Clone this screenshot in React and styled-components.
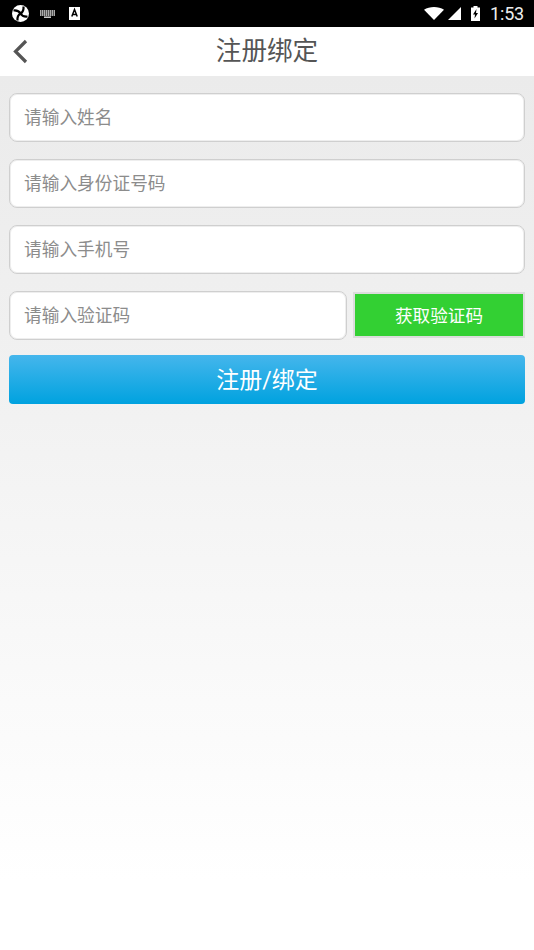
import styled, { createGlobalStyle } from 'styled-components';

const GlobalStyle = createGlobalStyle`
  html, body {
    margin: 0;
    padding: 0;
    height: 100%;
    background: #fff;
  }
  * {
    box-sizing: border-box;
  }
`;

const Page = styled.div`
  width: 534px;
  height: 950px;
  display: flex;
  flex-direction: column;
  overflow: hidden;
  font-family: 'Roboto', 'Noto Sans CJK SC', sans-serif;
`;

const StatusBar = styled.div`
  height: 27px;
  flex: none;
  background: #000;
  display: flex;
  align-items: center;
  justify-content: space-between;
  padding: 0 10px 0 12px;
`;

const StatusGroup = styled.div`
  display: flex;
  align-items: center;
  gap: ${(props) => props.$gap || '10px'};
`;

const SignalGroup = styled.div`
  display: flex;
  align-items: center;
  gap: 4px;
`;

const NoticeIcon = styled.svg`
  margin-left: 3px;
`;

const Clock = styled.span`
  font-size: 18px;
  letter-spacing: -0.2px;
  color: #eee;
  line-height: 27px;
`;

const Header = styled.header`
  height: 49px;
  flex: none;
  background: #fff;
  display: flex;
  align-items: center;
  justify-content: center;
  position: relative;
`;

const BackButton = styled.div`
  position: absolute;
  left: 12px;
  top: 12px;
  width: 16px;
  height: 25px;
`;

const Title = styled.h1`
  margin: 0;
  font-size: 25.6px;
  font-weight: 400;
  color: #555;
  line-height: 49px;
`;

const Content = styled.main`
  flex: 1;
  background: linear-gradient(180deg, #ebebeb 0%, #f1f1f1 35%, #ffffff 92%);
  padding: 17px 9px 0;
  display: flex;
  flex-direction: column;
  gap: 17px;
`;

const Field = styled.input`
  display: block;
  width: ${(props) => (props.$short ? '338px' : '100%')};
  height: 49px;
  flex: none;
  padding: 0 14px;
  background: #fff;
  border: 1px solid #cfcfcf;
  box-shadow: inset 0 0 0 1px #eeeeee;
  border-radius: 8px;
  outline: none;
  font-family: inherit;
  font-size: 17.7px;
  color: #333;

  &::placeholder {
    color: #8c8c8c;
    opacity: 1;
  }
`;

const CodeRow = styled.div`
  display: flex;
  align-items: flex-start;
  justify-content: space-between;
`;

const CodeButton = styled.button`
  width: 172px;
  height: 46px;
  margin-top: 1px;
  padding: 0 0 1px;
  background: #33d033;
  border: 2px solid #dcdcdc;
  color: #fff;
  font-family: inherit;
  font-size: 17.6px;
`;

const SubmitButton = styled.button`
  height: 49px;
  margin-top: -2px;
  padding: 0 0 3px;
  border: none;
  border-radius: 4px;
  background: linear-gradient(180deg, #45b6ec 0%, #00a2df 100%);
  color: #fff;
  font-family: inherit;
  font-size: 23px;
`;

export default function App() {
  return (
    <Page>
      <GlobalStyle />
      <StatusBar>
        <StatusGroup $gap="11px">
          <svg width="17" height="17" viewBox="0 0 17 17">
            <circle cx="8.5" cy="8.5" r="8.5" fill="#fff" />
            <path d="M8.500 8.500 Q12 6.500 11.500 1.500 M8.500 8.500 Q10.500 12 15.500 11.500 M8.500 8.500 Q5 10.500 5.500 15.500 M8.500 8.500 Q6.500 5 1.500 5.500" fill="none" stroke="#000" strokeWidth="2.200" />
          </svg>
          <svg width="15" height="8" viewBox="0 0 15 8">
            <path d="M0 1h15M0 3h15M0 5h15" stroke="#e4e4e4" strokeWidth="1.300" strokeDasharray="1.500 .5" />
            <path d="M4 7.200h7" stroke="#e4e4e4" strokeWidth="1.400" />
          </svg>
          <NoticeIcon width="11" height="13" viewBox="0 0 11 13">
            <rect width="11" height="13" fill="#fff" />
            <path d="M2.800 9.500 L5.500 2.500 L8.200 9.500 M3.800 7.400h3.400" stroke="#000" strokeWidth="1.500" fill="none" />
          </NoticeIcon>
        </StatusGroup>
        <StatusGroup>
          <SignalGroup>
            <svg width="20" height="13" viewBox="0 0 20 13">
              <path d="M0 2.800 C5.500 -.9 14.500 -.9 20 2.800 L10 13 Z" fill="#fff" />
            </svg>
            <svg width="13" height="13" viewBox="0 0 13 13">
              <path d="M13 0 V13 H0 Z" fill="#fff" />
            </svg>
          </SignalGroup>
          <svg width="9" height="15" viewBox="0 0 9 15">
            <path d="M2.500 0h4v1.500H9V15H0V1.500h2.500Z" fill="#fff" />
            <path d="M5.500 3 L2 8.500 H4 L3.500 12.500 L7 7 H5 Z" fill="#000" />
          </svg>
          <Clock>1:53</Clock>
        </StatusGroup>
      </StatusBar>
      <Header>
        <BackButton>
          <svg width="16" height="25" viewBox="0 0 16 25">
            <path d="M14 2 L3.500 12.500 L14 23" fill="none" stroke="#555" strokeWidth="3.200" />
          </svg>
        </BackButton>
        <Title>注册绑定</Title>
      </Header>
      <Content>
        <Field placeholder="请输入姓名" />
        <Field placeholder="请输入身份证号码" />
        <Field placeholder="请输入手机号" />
        <CodeRow>
          <Field $short placeholder="请输入验证码" />
          <CodeButton>获取验证码</CodeButton>
        </CodeRow>
        <SubmitButton>注册/绑定</SubmitButton>
      </Content>
    </Page>
  );
}
